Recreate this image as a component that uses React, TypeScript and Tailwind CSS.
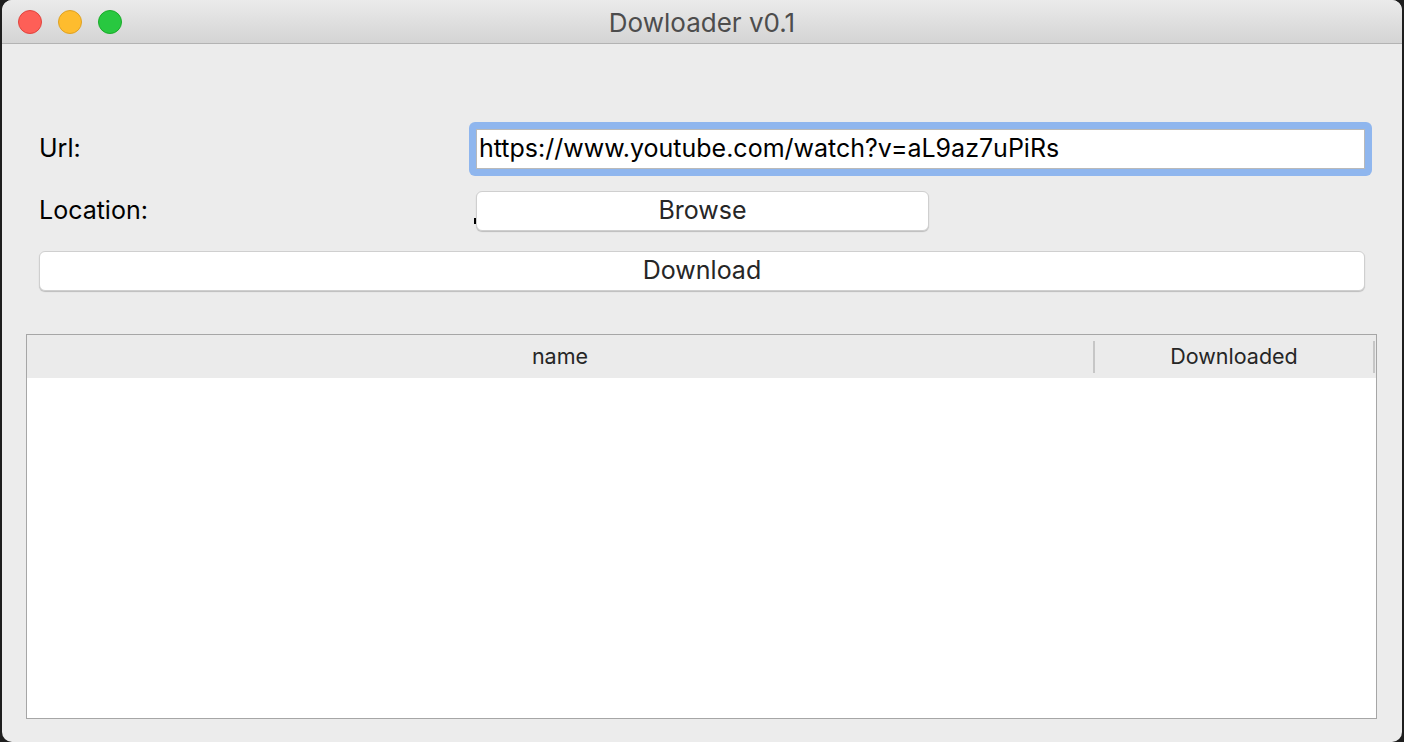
export default function App() {
  return (
    <div className="flex h-[742px] w-[1404px] bg-[#1e1e1e] px-[2px] font-['Inter',sans-serif]">
      <div className="flex h-[742px] w-[1400px] flex-col overflow-hidden rounded-[10px] bg-[#ececec]">
        {/* title bar */}
        <div className="relative flex h-[44px] shrink-0 items-center justify-center border-b border-[#b3b3b3] bg-gradient-to-b from-[#ebebeb] to-[#d4d4d4]">
          <div className="absolute left-[16px] top-[10px] flex gap-[16px]">
            <span className="size-[24px] rounded-full border border-[#e0443e] bg-[#fe5f57]" />
            <span className="size-[24px] rounded-full border border-[#dea123] bg-[#febc2e]" />
            <span className="size-[24px] rounded-full border border-[#1aab29] bg-[#28c840]" />
          </div>
          <span className="pt-[2px] text-[26px] text-[#4d4d4d]">Dowloader v0.1</span>
        </div>

        {/* form */}
        <div className="flex flex-1 flex-col pl-[24px] pr-[25px]">
          <div className="ml-[13px] mt-[78px] flex items-center">
            <span className="w-[430px] text-[25px] text-black">Url:</span>
            <div className="h-[54px] w-[903px] rounded-[6px] bg-[#8fb6ee] p-[7px]">
              <div className="flex h-full items-center border border-[#b9b9b9] bg-white pl-[2px] text-[25px] text-black">
                https://www.youtube.com/watch?v=aL9az7uPiRs
              </div>
            </div>
          </div>

          <div className="relative ml-[13px] mt-[15px] flex items-center">
            <span className="w-[437px] text-[25px] text-black">Location:</span>
            <span className="absolute left-[435px] top-[27px] h-[6px] w-[2px] bg-black" />
            <button className="relative h-[40px] w-[453px] rounded-[6px] border border-[#cfcfcf] bg-white text-[25px] text-[#262626] shadow-[0_1px_1px_rgba(0,0,0,0.2)]">
              Browse
            </button>
          </div>

          <button className="ml-[13px] mt-[20px] h-[40px] w-[1326px] rounded-[6px] border border-[#cfcfcf] bg-white text-[25px] text-[#262626] shadow-[0_1px_1px_rgba(0,0,0,0.2)]">
            Download
          </button>

          {/* table */}
          <div className="mt-[43px] flex h-[385px] flex-col border border-[#a6a6a6] bg-white">
            <div className="flex h-[43px] shrink-0 items-center bg-[#ebebeb] text-[21.5px] text-[#262626]">
              <div className="flex h-[32px] w-[1068px] items-center justify-center border-r-2 border-[#c6c6c6]">
                name
              </div>
              <div className="flex h-[32px] w-[280px] items-center justify-center border-r-2 border-[#c6c6c6]">
                Downloaded
              </div>
            </div>
            <div className="flex-1 bg-white" />
          </div>
        </div>
      </div>
    </div>
  )
}
